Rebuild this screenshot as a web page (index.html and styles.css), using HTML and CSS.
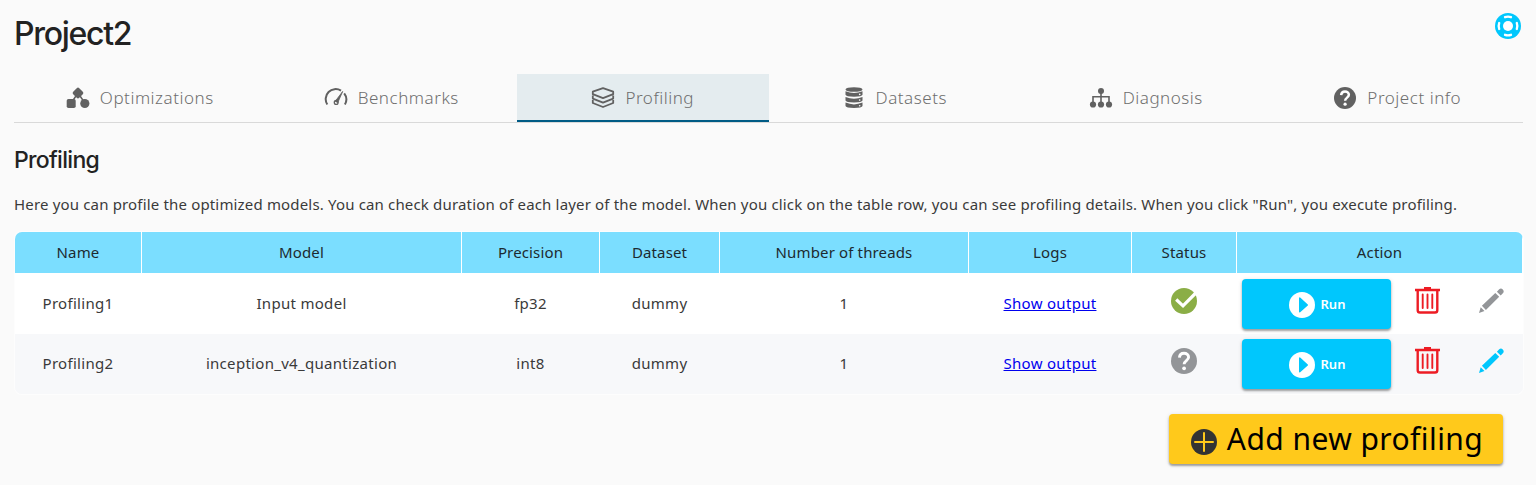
FILE: index.html
```html
<!DOCTYPE html>
<html lang="en">
<head>
<meta charset="utf-8">
<title>Project2</title>
<link rel="stylesheet" href="styles.css">
</head>
<body>
<svg class="defs" width="0" height="0">
  <symbol id="question" viewBox="0 0 26 26"><circle cx="13" cy="13" r="13" fill="currentColor"/><path d="M8.400 9.600C8.600 6.800 10.400 5.200 13 5.200s4.600 1.700 4.600 4c0 3.200-4.500 3.500-4.500 7" fill="none" stroke="#fff" stroke-width="2.900"/><circle cx="13.100" cy="20.300" r="1.900" fill="#fff"/></symbol>
  <symbol id="play" viewBox="0 0 26 26"><circle cx="13" cy="13" r="13" fill="#fff"/><path d="M10 6.200V19.800a.7.7 0 0 0 1.200.4L18.800 13.500a.7.7 0 0 0 0-1L11.200 5.600A.7.7 0 0 0 10 6.200z" fill="#00c7fd"/></symbol>
  <symbol id="trash" viewBox="0 0 25 27"><path d="M0 3H25M9 1.300h7M2.700 3V23.200Q2.700 25.500 5 25.500H20Q22.300 25.500 22.300 23.200V3" fill="none" stroke="#ed1c24" stroke-width="2.400"/><path d="M7.700 7.500V21M12.500 7.500V21M17.300 7.500V21" stroke="#ed1c24" stroke-width="1.900" stroke-linecap="round"/></symbol>
  <symbol id="pencil" viewBox="0 0 25 25"><path d="M0 25 1.700 19.300 5.500 23.100zM2.900 17.700 16.300 4.900 20.200 8.800 6.900 22zM17.900 3.700 20.200 1.200a2.800 2.800 0 0 1 3.900 3.900L21.700 7.500z" fill="currentColor"/></symbol>
</svg>
<main class="page">
  <header class="top">
    <h1>Project2</h1>
    <svg class="help" viewBox="0 0 26 26"><circle cx="13" cy="13" r="13" fill="#00c7fd"/><circle cx="13" cy="13" r="5" fill="#fff"/><g fill="none" stroke="#fff" stroke-width="2.300" stroke-linecap="round"><path d="M10 4.200Q13 3.100 16 4.200M10 21.800Q13 22.900 16 21.800M4.200 10Q3.100 13 4.200 16M21.800 10Q22.900 13 21.800 16"/></g></svg>
  </header>
  <nav class="tabs">
    <a class="tab"><svg class="tab-icon" viewBox="0 0 24 24"><path d="M12 7 4.500 18M12 7l7.500 11" stroke="currentColor" stroke-width="1.500"/><rect x="7.700" y="2.700" width="8.600" height="8.600" rx="1.800" transform="rotate(45 12 7)" fill="currentColor"/><rect x=".7" y="13" width="9" height="9" rx="1.800" fill="currentColor"/><circle cx="18.800" cy="17.500" r="4.600" fill="currentColor"/></svg><span>Optimizations</span></a>
    <a class="tab"><svg class="tab-icon" viewBox="0 0 24 24" fill="none" stroke="currentColor"><path d="M3.300 18.500A10 10 0 0 1 17 4.600M20.200 7.400A10 10 0 0 1 20.900 18.500" stroke-width="2"/><path d="M11 15.600 18.700 5.400 13.600 17" fill="currentColor" stroke-width=".8"/><circle cx="12.200" cy="16.400" r="1.900" stroke-width="1.300"/></svg><span>Benchmarks</span></a>
    <a class="tab active"><svg class="tab-icon" viewBox="0 0 24 24" fill="none" stroke="currentColor" stroke-width="1.800" stroke-linejoin="round"><path d="M12 2.100 22.200 5.700V8.200L12 12.200 1.800 8.200V5.700zM1.800 9.500V12.600L12 16.600l10.200-4V9.500M1.800 13.900V17L12 21l10.200-4v-3.100"/></svg><span>Profiling</span></a>
    <a class="tab"><svg class="tab-icon" viewBox="0 0 24 24" fill="currentColor"><ellipse cx="12" cy="3.500" rx="8.500" ry="2.300"/><path id="disk" d="M3.500 5.200Q12 8.800 20.500 5.200V8.700Q20 10.600 12 10.700 4 10.600 3.500 8.700z"/><use href="#disk" y="5.700"/><use href="#disk" y="11.400"/><g fill="#fafafa"><circle cx="17.700" cy="8.400" r=".8"/><circle cx="17.700" cy="14.100" r=".8"/><circle cx="17.700" cy="19.800" r=".8"/></g></svg><span>Datasets</span></a>
    <a class="tab"><svg class="tab-icon" viewBox="0 0 24 24"><path d="M12 5v14M4 19v-8.200h16V19" fill="none" stroke="currentColor" stroke-width="1.600"/><g fill="currentColor"><circle cx="12" cy="5" r="3"/><circle cx="4" cy="18.500" r="3.100"/><circle cx="12" cy="18.500" r="3.100"/><circle cx="20" cy="18.500" r="3.100"/></g></svg><span>Diagnosis</span></a>
    <a class="tab"><svg class="tab-icon tab-question"><use href="#question"/></svg><span>Project info</span></a>
  </nav>
  <h2>Profiling</h2>
  <p class="intro">Here you can profile the optimized models. You can check duration of each layer of the model. When you click on the table row, you can see profiling details. When you click "Run", you execute profiling.</p>
  <table>
    <colgroup><col class="c1"><col class="c2"><col class="c3"><col class="c4"><col class="c5"><col class="c6"><col class="c7"><col class="c8"></colgroup>
    <thead><tr><th>Name</th><th>Model</th><th>Precision</th><th>Dataset</th><th>Number of threads</th><th>Logs</th><th>Status</th><th>Action</th></tr></thead>
    <tbody>
      <tr class="first"><td>Profiling1</td><td>Input model</td><td>fp32</td><td>dummy</td><td>1</td><td><a class="link" href="#">Show output</a></td>
        <td><svg class="status" viewBox="0 0 26 26"><circle cx="13" cy="13" r="13" fill="#8bae46"/><path d="M5.200 11.500 12 17.800 24.800 5" fill="none" stroke="#fff" stroke-width="3.200"/></svg></td>
        <td><div class="actions"><button class="run"><svg class="play"><use href="#play"/></svg><span>Run</span></button><svg class="trash"><use href="#trash"/></svg><svg class="pencil muted"><use href="#pencil"/></svg></div></td></tr>
      <tr class="second"><td>Profiling2</td><td>inception_v4_quantization</td><td>int8</td><td>dummy</td><td>1</td><td><a class="link" href="#">Show output</a></td>
        <td><svg class="status muted"><use href="#question"/></svg></td>
        <td><div class="actions"><button class="run"><svg class="play"><use href="#play"/></svg><span>Run</span></button><svg class="trash"><use href="#trash"/></svg><svg class="pencil"><use href="#pencil"/></svg></div></td></tr>
    </tbody>
  </table>
  <footer class="bottom"><button class="add"><svg class="plus" viewBox="0 0 26 26"><circle cx="13" cy="13" r="13" fill="#333"/><path d="M13 4v18M4 13h18" stroke="#ffc91b" stroke-width="2" stroke-linecap="round"/></svg><span>Add new profiling</span></button></footer>
</main>
</body>
</html>
```
FILE: styles.css
```css
* { box-sizing: border-box; }
body { margin: 0; background: #fafafa; color: #3a3a3a; font: 15px/20px "Noto Sans", sans-serif; }
svg { display: block; flex: none; }
.defs { position: absolute; }
.page { min-height: 485px; padding: 0 13px 0 14px; }
.top { display: flex; justify-content: space-between; height: 74px; padding: 13px 2px 0 0; }
h1, h2 { margin: 0; color: #222; font-family: Inter, sans-serif; font-weight: 500; }
h1 { padding-top: 1px; font-size: 32px; line-height: 40px; letter-spacing: -1.3px; }
h2 { margin-top: 23px; font-size: 23px; line-height: 28px; letter-spacing: -.7px; }
.help { width: 26px; height: 26px; }
.tabs { display: grid; grid-template-columns: repeat(6, 1fr); height: 49px; border-bottom: 1px solid #d9d9d9; }
.tab { display: flex; align-items: center; justify-content: center; gap: 10px; height: 48px; color: #616161; font-size: 17px; font-weight: 300; letter-spacing: .53px; }
.tab span { color: #6e6e6e; }
.tab-icon { width: 24px; height: 24px; }
.tab-question { width: 22px; height: 22px; margin: 0 1px; }
.active { background: #e4ecef; box-shadow: inset 0 -2px #005b85; }
.intro { margin: 20px 0 18px; white-space: nowrap; letter-spacing: .165px; }
table { width: 1508px; margin-left: 1px; table-layout: fixed; border-spacing: 0; border-radius: 7px; box-shadow: 0 0 0 1px #fdfdfd; overflow: hidden; text-align: center; }
.c1 { width: 127px; } .c2 { width: 320px; } .c3 { width: 138px; } .c4 { width: 120px; }
.c5 { width: 249px; } .c6 { width: 163px; } .c7 { width: 105px; } .c8 { width: 286px; }
th { height: 41px; padding: 0 0 2px; background: #7bdeff; border-right: 1px solid #fff; color: #1d2a30; font-weight: 400; letter-spacing: .14px; }
td { padding: 0 1px 2px 0; letter-spacing: .3px; }
td:last-child { padding: 0; }
.first td { height: 61px; background: #fff; }
.second td { height: 60px; background: #f7f8fa; }
.link { color: #0000ee; text-decoration: underline; }
.status { width: 26px; height: 26px; margin: -4px auto 0; }
.actions { display: flex; align-items: center; padding-left: 5px; }
.run { display: flex; align-items: center; justify-content: center; gap: 6px; width: 149px; height: 50px; padding: 2px 0 0 1px; border: 0; border-radius: 4px; background: #00c7fd; color: #fff; font: 600 13px "Noto Sans", sans-serif; box-shadow: 0 2px 2px rgba(0,0,0,.3), 0 1px 4px rgba(0,0,0,.15); }
.run span { padding-bottom: 2px; }
.play { width: 26px; height: 26px; }
.trash { width: 25px; height: 27px; margin: -7px 0 0 24px; }
.pencil { width: 25px; height: 25px; margin: -7px 0 0 39px; color: #00c7fd; }
.muted { color: #939598; }
.bottom { display: flex; justify-content: flex-end; padding: 20px 20px 20px 0; }
.add { display: flex; align-items: center; justify-content: center; gap: 10px; width: 334px; height: 50px; padding: 0 0 0 2px; border: 0; border-radius: 4px; background: #ffc91b; color: #000; font: 400 30px/40px "Noto Sans", sans-serif; letter-spacing: .43px; box-shadow: 0 2px 2px rgba(0,0,0,.3), 0 1px 4px rgba(0,0,0,.15); white-space: nowrap; }
.plus { width: 26px; height: 26px; margin-top: 6px; }
```
